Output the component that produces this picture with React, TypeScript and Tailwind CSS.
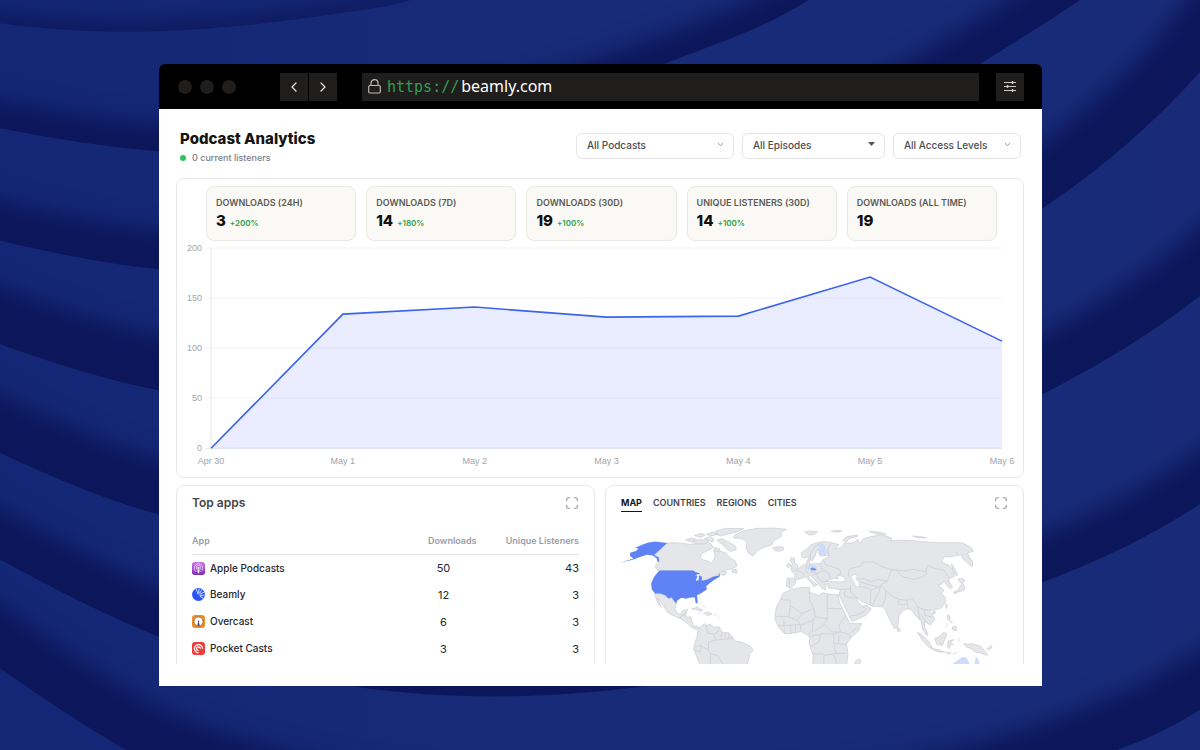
import { ChangeEvent, useState } from "react";
import { ChevronDown, ChevronLeft, ChevronRight, Maximize } from "lucide-react";

const stats = [
  { label: "Downloads (24h)", value: 3, change: "+200%" },
  { label: "Downloads (7d)", value: 14, change: "+180%" },
  { label: "Downloads (30d)", value: 19, change: "+100%" },
  { label: "Unique Listeners (30d)", value: 14, change: "+100%" },
  { label: "Downloads (all time)", value: 19, change: "" },
];

const points = [
  { day: "Apr 30", count: 0 },
  { day: "May 1", count: 134 },
  { day: "May 2", count: 141 },
  { day: "May 3", count: 131 },
  { day: "May 4", count: 132 },
  { day: "May 5", count: 171 },
  { day: "May 6", count: 107 },
];

const apps = [
  { name: "Apple Podcasts", icon: <AppleIcon />, downloads: 50, listeners: 43 },
  { name: "Beamly", icon: <BeamlyIcon />, downloads: 12, listeners: 3 },
  { name: "Overcast", icon: <OvercastIcon />, downloads: 6, listeners: 3 },
  { name: "Pocket Casts", icon: <PocketIcon />, downloads: 3, listeners: 3 },
];

// lower edge of every fold, from top to bottom, with the width of its shadow
const folds = [
  { edge: "M-60 14 C60 36 160 38 306 18 S400 4 520 -60", shadow: 20 },
  { edge: "M-60 116 Q80 146 157 151 C360 160 540 110 669 62 S780 18 900 -60", shadow: 54 },
  { edge: "M-60 226 Q80 262 157 269 C460 300 760 200 983 62 S1030 20 1120 -60", shadow: 78 },
  { edge: "M-60 322 Q80 376 157 390 C500 440 820 340 1043 208 Q1130 150 1200 72 L1300 -60", shadow: 108 },
  { edge: "M-60 424 Q80 494 157 514 C500 590 800 510 1043 394 Q1130 350 1200 296 L1300 210", shadow: 106 },
  { edge: "M-60 526 Q80 606 157 636 C340 704 500 704 640 687 S930 630 1043 582 Q1130 550 1200 504 L1300 440", shadow: 90 },
  { edge: "M-60 625 Q50 706 126 750 C400 880 900 850 1117 750 Q1160 735 1200 710 L1300 650", shadow: 104 },
];

function Background() {
  return (
    <svg aria-hidden="true" className="absolute inset-0 h-full w-full" viewBox="0 0 1200 750" preserveAspectRatio="xMidYMid slice">
      <defs>
        <filter id="soft" filterUnits="userSpaceOnUse" x="-100" y="-150" width="1450" height="1150" colorInterpolationFilters="sRGB">
          <feGaussianBlur stdDeviation="11" />
        </filter>
        <linearGradient id="cloth" gradientUnits="userSpaceOnUse" x1="0" y1="0" x2="1200" y2="0">
          <stop offset="0" stopColor="#142776" />
          <stop offset="0.5" stopColor="#182b78" />
          <stop offset="1" stopColor="#192b78" />
        </linearGradient>
      </defs>
      <rect width="1200" height="750" fill="url(#cloth)" />
      {folds.map((fold) => (
        <g key={fold.edge}>
          <path d={fold.edge} fill="none" stroke="#0c165a" strokeWidth={fold.shadow} filter="url(#soft)" />
          <path d={fold.edge + " H1300 V1200 H-60 Z"} fill="url(#cloth)" />
        </g>
      ))}
    </svg>
  );
}

function AppleIcon() {
  return (
    <svg className="size-[13px]" viewBox="0 0 24 24" aria-hidden="true">
      <defs>
        <linearGradient id="purple" x1="0" y1="0" x2="0" y2="1">
          <stop offset="0" stopColor="#cf78ea" />
          <stop offset="1" stopColor="#7d2cb5" />
        </linearGradient>
      </defs>
      <rect width="24" height="24" rx="5" fill="url(#purple)" />
      <g fill="none" stroke="#f3dcfb" strokeWidth="1.4" strokeLinecap="round">
        <path d="M7.5 18 A8 8 0 1 1 16.500 18" />
        <path d="M9 14 A4.500 4.500 0 1 1 15 14" />
      </g>
      <circle cx="12" cy="11" r="2" fill="#fff" />
      <path d="M10 14.500 Q12 13.300 14 14.500 L13.200 20.500 Q12 21.500 10.800 20.500Z" fill="#fff" />
    </svg>
  );
}

function BeamlyIcon() {
  return (
    <svg className="size-[13px]" viewBox="0 0 24 24" aria-hidden="true">
      <circle cx="12" cy="12" r="12" fill="#2a55f5" />
      <g stroke="#d7e0ff" strokeWidth="1.800" strokeLinecap="round">
        <path d="M11 11 L8 2.500" />
        <path d="M12.500 9.500 L13 2" />
        <path d="M14 9.500 L18 3.500" />
        <path d="M14.500 11.500 L21.500 8" />
        <path d="M15 13.500 L22.500 13.500" />
        <path d="M15 15.500 L20.500 18.500" />
      </g>
    </svg>
  );
}

function OvercastIcon() {
  return (
    <svg className="size-[13px]" viewBox="0 0 24 24" aria-hidden="true">
      <rect width="24" height="24" rx="6" fill="#f08a24" />
      <circle cx="12" cy="12" r="8.500" fill="#fff" stroke="#8a6a3f" strokeWidth="1.600" />
      <path d="M12 11 L14.500 20 H9.500Z" fill="#4a4658" />
      <circle cx="12" cy="11.500" r="1.500" fill="#4a4658" />
    </svg>
  );
}

function PocketIcon() {
  return (
    <svg className="size-[13px]" viewBox="0 0 24 24" aria-hidden="true">
      <rect width="24" height="24" rx="6" fill="#f03b3a" />
      <g fill="none" stroke="#fff" strokeWidth="2.400">
        <path d="M12 20 A7.500 7.500 0 1 1 19.500 12.500" />
        <path d="M12 16 A3.500 3.500 0 1 1 15.500 12.500" />
      </g>
    </svg>
  );
}

function SlidersIcon() {
  return (
    <svg className="h-3 w-3" viewBox="0 0 12 12" fill="none" stroke="#c9c9c9" aria-hidden="true">
      <path d="M0 1.500 H12 M0 5.500 H12 M0 9.500 H12" />
      <path d="M8.500 0 V3 M3.500 4 V7 M8.500 8 V11" strokeWidth="1.500" />
    </svg>
  );
}

function LockIcon() {
  return (
    <svg className="h-[15px] w-[13px] shrink-0" viewBox="0 0 13 15" fill="none" stroke="#b9b9b9" strokeWidth="1.200" aria-hidden="true">
      <rect x="0.700" y="6.500" width="11.600" height="7.500" rx="1.200" />
      <path d="M3 6.500 V4.200 A3.500 3.500 0 0 1 10 4.200 V6.500" />
    </svg>
  );
}

function BrowserBar() {
  const [url, setUrl] = useState("beamly.com");
  const handleUrl = (e: ChangeEvent<HTMLInputElement>) => { setUrl(e.target.value) }

  return (
    <div className="flex h-[45px] items-center rounded-t-md bg-black pr-[18px] pl-[19px]">
      <div className="flex gap-2">
        <span className="size-[14px] rounded-full bg-[#1f1e1d]"></span>
        <span className="size-[14px] rounded-full bg-[#1f1e1d]"></span>
        <span className="size-[14px] rounded-full bg-[#1f1e1d]"></span>
      </div>
      <div className="ml-11 flex gap-px">
        <button type="button" aria-label="Back" className="flex size-7 items-center justify-center bg-[#1f1e1d] text-gray-200">
          <ChevronLeft size={16} strokeWidth={1.8} />
        </button>
        <button type="button" aria-label="Forward" className="flex size-7 items-center justify-center bg-[#1f1e1d] text-gray-200">
          <ChevronRight size={16} strokeWidth={1.8} />
        </button>
      </div>
      <div className="ml-[25px] flex h-7 flex-1 items-center bg-[#1f1e1d] px-1.5">
        <LockIcon />
        <div className="ml-1.5 flex h-[26px] flex-1 items-baseline leading-6">
          <label htmlFor="url" className="font-['DejaVu_Sans_Mono',monospace] text-[15px] text-[#2f9e4f]">https://</label>
          <input
            id="url"
            type="text"
            value={url}
            onChange={handleUrl}
            className="ml-0.5 h-6 min-w-0 flex-1 bg-transparent font-['Noto_Sans',sans-serif] text-[16px] text-white outline-none"
          />
        </div>
      </div>
      <button type="button" aria-label="Settings" className="ml-[17px] flex size-7 items-center justify-center bg-[#1f1e1d]">
        <SlidersIcon />
      </button>
    </div>
  );
}

type FilterProps = { label: string; text: string; width: string; solid?: boolean };

function Filter({ label, text, width, solid }: FilterProps) {
  return (
    <div className={"relative " + width}>
      <select
        aria-label={label}
        className="h-[26px] w-full appearance-none rounded-md border border-[#e5e5e7] bg-white pl-2.5 text-[10px] font-medium text-[#4c4d53]"
      >
        <option>{text}</option>
      </select>
      {solid ? (
        <svg className="pointer-events-none absolute top-[11px] right-2.5 h-1 w-[7px]" viewBox="0 0 7 4" aria-hidden="true">
          <path d="M0 0 H7 L3.500 4Z" fill="#55565c" />
        </svg>
      ) : (
        <ChevronDown size={9} className="pointer-events-none absolute top-[9px] right-[9px] text-[#75767c]" />
      )}
    </div>
  );
}

function Chart() {
  const x = (i: number) => 34 + (i * 790) / 6;
  const y = (count: number) => 207 - count;
  const line = points.map((p, i) => x(i) + "," + y(p.count)).join(" ");

  return (
    <svg className="block w-full" viewBox="0 0 845 236" role="img" aria-label="Downloads per day">
      {[0, 50, 100, 150, 200].map((tick) => (
        <g key={tick}>
          <line x1="29" x2="824" y1={y(tick)} y2={y(tick)} stroke={tick ? "#f3f4f6" : "#dfe1e6"} />
          <text x="25" y={y(tick) + 3} textAnchor="end" fontSize="9" fill="#a1a4ac" fontFamily="Liberation Sans, Arial, sans-serif">{tick}</text>
        </g>
      ))}
      <line x1="34" x2="34" y1="7" y2="207" stroke="#e5e7eb" />
      <polygon points={"34,207 " + line + " 824,207"} fill="#4f63ff" fillOpacity="0.12" />
      <polyline points={line} fill="none" stroke="#3b63ee" strokeWidth="1.600" />
      {points.map((p, i) => (
        <text key={p.day} x={x(i)} y="223" textAnchor="middle" fontSize="9" fill="#a1a4ac" fontFamily="Liberation Sans, Arial, sans-serif">{p.day}</text>
      ))}
    </svg>
  );
}

function WorldMap() {
  return (
    <svg className="block w-full" viewBox="18 30 1248 432" role="img" aria-label="Listeners by country" strokeLinejoin="round">
      <g fill="#e5e6ea" stroke="#cbccd2" strokeWidth="2">
        {/* Canada and the arctic islands */}
        <path d="M201 99 L222 98 L250 100 L268 103 L300 100 L310 104 L322 96 L332 101 L340 112 L322 122 L305 130 L300 142 L310 150 L322 152 L332 160 L340 150 L345 135 L340 122 L360 122 L378 130 L388 143 L405 152 L410 168 L395 176 L375 180 L362 183 L380 186 L375 194 L365 196 L358 190 L340 200 L318 210 L302 214 L305 200 L290 190 L278 181 L172 181 L165 168 L176 155 L176 142 L162 135Z" />
        <path d="M395 180 l12 -3 l4 12 l-14 -2z M255 90 l18 -6 l15 4 l-12 8z M278 95 L300 88 L325 92 L318 100 L290 102Z M282 76 L305 70 L315 76 L300 82Z M312 86 L330 80 L342 88 L336 96Z M318 72 l22 -6 l14 6 l-20 6z M345 64 L375 55 L430 56 L415 64 L385 72 L360 78 L350 74Z M350 90 L365 86 L385 96 L405 108 L408 118 L392 124 L378 116 L368 104Z M345 112 l14 4 l-4 8 l-14 -4z" />
        {/* Greenland, Iceland */}
        <path d="M402 76 L430 62 L470 55 L520 54 L558 58 L540 68 L545 78 L520 92 L515 104 L490 112 L470 122 L458 138 L445 130 L437 115 L440 98 L425 85 L400 84Z M518 113 l12 -3 l18 1 l2 8 l-16 5 l-12 -4z" />
        {/* Mexico, central America, the Caribbean */}
        <path d="M163 250 L180 251 L195 256 L205 265 L215 263 L221 271 L228 280 L224 295 L230 308 L240 312 L250 300 L262 298 L258 310 L245 316 L238 324 L218 316 L202 306 L192 290 L180 272 L172 262 L178 278 L184 292 L176 284 L168 266Z M238 324 L245 316 L258 313 L256 320 L272 320 L276 335 L278 347 L290 347 L297 352 L288 357 L275 352 L262 340 L248 330Z" />
        <path d="M274 296 L290 291 L308 300 L302 303 L285 297Z M310 309 l14 -4 l12 6 l-12 5z M296 309 h6 M342 314 h6 M300 276 l4 6 M308 284 l10 8 M357 320 l1 3" />
        {/* South America */}
        <path d="M293 357 L312 340 L318 345 L330 342 L340 350 L358 350 L365 365 L385 368 L397 380 L402 392 L425 396 L448 406 L458 418 L448 432 L440 470 L302 470 L290 440 L280 415 L285 395 L292 375Z" />
        <path fill="none" d="M318 345 L322 368 L342 372 L345 390 M342 372 L358 360 M365 365 L362 385 M375 368 L374 384 M387 370 L382 386 M345 390 L362 388 L382 386 L398 382 M345 390 L325 396 L325 420 L302 405 L285 408 M325 420 L332 432 L352 435 L368 462 M332 432 L330 462 M283 418 L300 425 L302 405" />
      </g>
      {/* United States */}
      <path fill="#5f83f6" d="M60 158 L100 145 L90 138 L90 128 L108 123 L115 115 L105 113 L128 103 L145 97 L165 94 L201 99 L162 135 L176 142 L177 155 L172 155 L170 145 L158 136 L140 134 L122 140 L100 148Z" />
      <path fill="#5f83f6" d="M178 181 L278 181 L286 186 L300 190 L284 195 L292 197 L287 212 L295 210 L296 196 L305 200 L304 212 L322 208 L338 200 L354 196 L359 188 L358 200 L340 210 L332 216 L318 228 L320 238 L305 248 L290 256 L292 270 L292 281 L286 278 L284 262 L270 262 L258 266 L244 263 L232 270 L228 280 L220 270 L215 262 L205 265 L195 255 L180 250 L165 250 L155 238 L153 220 L162 200 L170 190Z" />
      <g transform="translate(510 0)" fill="#e5e6ea" stroke="#cbccd2" strokeWidth="2">
        {/* islands of the Arctic sea */}
        <path d="M102 66 l15 -3 l25 2 l-10 8 l-15 2z M182 64 l20 -3 l12 2 l-15 4z M215 92 L228 80 L258 75 L262 78 L235 86 L228 96Z M295 64 L325 66 L345 72 L320 73Z M425 78 l20 1 l22 4 l-25 1z" />
        {/* Eurasia */}
        <path d="M185 98 L205 104 L192 118 L212 112 L220 100 L250 98 L262 88 L268 102 L278 86 L300 80 L335 74 L362 84 L362 92 L400 90 L430 92 L455 95 L500 98 L540 98 L575 98 L600 112 L608 124 L590 128 L596 142 L606 156 L604 170 L590 158 L575 146 L572 134 L555 138 L560 126 L548 140 L520 140 L512 156 L534 165 L548 180 L550 200 L535 204 L535 214 L545 230 L540 236 L530 228 L522 214 L512 222 L502 224 L512 234 L520 240 L512 250 L524 262 L524 278 L510 294 L490 300 L475 300 L485 312 L492 328 L478 344 L468 338 L460 334 L462 352 L472 372 L468 376 L456 358 L450 330 L438 320 L425 304 L418 296 L400 298 L385 316 L382 345 L372 356 L362 338 L352 318 L345 300 L334 290 L305 288 L285 278 L270 272 L258 262 L262 276 L275 288 L290 286 L302 296 L285 316 L244 334 L232 308 L212 268 L205 252 L210 238 L175 234 L168 222 L180 214 L210 216 L226 212 L220 200 L205 195 L198 204 L205 206 L190 204 L175 210 L164 222 L165 240 L152 232 L142 218 L120 196 L112 200 L132 218 L142 224 L130 230 L122 218 L105 200 L92 206 L78 208 L72 224 L62 234 L48 230 L50 204 L72 204 L74 190 L62 182 L80 178 L96 166 L108 162 L110 150 L116 150 L118 162 L150 160 L158 148 L175 140 L172 118 L176 104Z" />
        <path d="M94 140 L92 128 L108 118 L120 105 L140 98 L160 94 L185 98 L178 104 L172 118 L175 136 L150 138 L146 132 L145 115 L138 125 L133 140 L125 152 L114 148 L112 140 L98 144Z" />
        <path fill="#fff" d="M240 200 L252 192 L262 196 L256 206 L266 216 L268 228 L256 230 L248 214Z" />
        <path d="M62 178 L82 174 L82 166 L72 156 L72 145 L62 142 L60 152 L66 160 L62 168Z M48 166 l8 -8 l5 7 l-7 8z" />
        <path fill="none" d="M234 200 L234 185 L240 175 L270 168 L278 156 L310 156 L330 168 L362 178 L378 180 L400 182 L430 178 L465 185 L470 165 L490 175 L520 180 L535 204 M378 180 L395 200 L430 208 L455 200 L470 188 L465 185 M362 178 L355 200 L350 212 L320 208 L300 215 L280 205 L262 206 M350 212 L330 225 L345 240 L360 255 L385 268 L408 270 L425 265 L440 290 L460 298 L475 300 M330 225 L325 245 L315 262 L305 288 M345 240 L345 262 L335 288 M268 228 L285 232 L300 240 L300 285 M240 225 L240 245 L258 262 M300 240 L330 228 M210 238 L240 236 M225 240 L220 256 L235 262 L258 264 M270 216 L320 230 M236 318 L262 314 L285 300 M275 290 L288 296 M408 270 L412 295 M440 290 L448 330 M460 298 L462 315 L482 320 M450 310 L465 335 M385 268 L382 282 L410 284" />
        <path fill="none" d="M158 148 L165 165 L180 168 L208 178 L210 190 L200 196 M150 160 L152 175 L168 182 M118 164 L118 172 M108 165 L106 180 L112 190 M80 180 L100 190 L100 200 M58 206 L56 230 M118 185 L140 190 L155 182 L175 190 L178 204 M140 190 L142 205 L155 215 L175 212 M125 196 L140 190 M120 150 L120 130 L135 108 L150 100" />
        {/* Africa */}
        <path d="M38 250 L60 238 L95 232 L116 232 L118 246 L145 256 L155 248 L180 252 L203 254 L206 275 L224 312 L238 340 L272 340 L265 360 L240 385 L228 400 L232 430 L228 470 L126 470 L128 435 L116 400 L118 382 L108 372 L92 364 L60 370 L42 370 L25 352 L15 330 L14 315 L18 290 L30 268Z M250 466 L255 452 L266 446 L270 450 L266 466Z" />
        <path fill="none" d="M30 268 L60 270 L58 285 L95 310 L130 295 L118 270 L116 246 M130 295 L135 320 L170 326 L170 252 M60 285 L55 320 L16 318 M170 295 L214 295 M55 320 L80 330 L95 310 M80 330 L90 345 L128 330 L135 320 M90 345 L92 364 M75 345 L75 368 M60 345 L62 370 M22 345 L60 345 L90 342 M40 330 L42 368 M128 330 L125 360 L112 372 M170 326 L160 345 L135 360 L125 365 M165 345 L185 365 L210 365 L205 345 L218 325 L226 314 M210 365 L235 372 L262 350 M235 372 L238 385 M118 378 L150 372 L160 370 L190 372 L190 400 L195 430 L165 435 L155 430 L128 432 M190 400 L228 402 M195 430 L230 428 M160 435 V462 M190 432 L200 462 M150 372 L145 395 L120 410 M190 372 L210 365 M205 375 L204 400" />
        {/* Asian islands */}
        <path d="M378 350 l8 4 l3 8 l-8 2z M542 162 L552 175 L560 195 L555 196 L546 180Z M562 206 l16 0 l4 8 l-14 4z M575 218 L582 230 L580 240 L560 246 L552 252 L548 246 L562 240 L568 228Z M526 282 l4 3 l-3 10 l-3 -6z M486 304 l8 0 l-2 7 l-6 -2z M530 314 L538 318 L536 330 L545 338 L540 336 L530 325Z M545 350 L556 348 L556 362 L545 358Z M526 350 l6 -8 M440 366 L455 375 L475 395 L485 414 L475 412 L455 390Z M482 415 L505 418 L522 426 L500 424Z M492 385 L505 380 L520 365 L528 372 L520 392 L515 405 L498 402Z M532 392 L550 388 L538 396 L548 404 L540 402 L536 414 L530 410Z M525 426 l16 2 l-6 4z M545 432 l14 -5 M563 384 l4 10 M578 400 L592 402 L605 400 L630 408 L640 420 L650 435 L628 428 L615 426 L600 415 L588 410Z M648 414 l12 -4 l-2 -6 l6 6 l-10 9z" />
        {/* Finland, Czechia, Australia */}
        <path stroke="none" fill="#cfdbfb" d="M140 102 L158 100 L164 110 L170 128 L160 138 L146 136 L142 126 L150 116Z M540 466 L562 448 L575 440 L590 444 L590 450 L600 466Z M610 466 L615 440 L622 445 L628 466Z M110 168 l14 -4 l16 4 l-4 6 l-24 4z" />
        <path stroke="none" fill="#7b9be0" d="M119 175 l7 -3 l12 4 l-2 5 l-14 0z" />
      </g>
    </svg>
  );
}

function App() {
  const [tab, setTab] = useState("MAP");

  return (
    <div className="relative min-h-screen overflow-hidden bg-[#152672] font-['Inter',sans-serif]">
      <Background />
      <main className="relative mr-[158px] ml-[159px] pt-16">
        <BrowserBar />
        <div className="bg-white pr-[18px] pb-[22px] pl-[17px]">
          <header className="flex items-start justify-between pt-5 pr-[3px] pl-1">
            <div>
              <h1 className="text-[15px] leading-5 font-extrabold text-[#15140f]">Podcast Analytics</h1>
              <p className="flex items-center gap-1.5 text-[9px] leading-[18px] font-medium text-[#7a7e8c]">
                <span className="size-1.5 rounded-full bg-[#2fc463]"></span>
                0 current listeners
              </p>
            </div>
            <div className="mt-0.5 flex gap-2">
              <Filter label="Podcast" text="All Podcasts" width="w-[158px]" />
              <Filter label="Episode" text="All Episodes" width="w-[143px]" solid />
              <Filter label="Access level" text="All Access Levels" width="w-[128px]" />
            </div>
          </header>

          <section className="mt-[11px] rounded-lg border border-[#e8e8ea] pt-[7px]">
            <div className="mr-[26px] ml-[29px] grid grid-cols-5 gap-2.5">
              {stats.map((stat) => (
                <div key={stat.label} className="h-[55px] rounded-lg border border-[#e9e8e3] bg-[#faf9f5] px-[9px] pt-2.5">
                  <p className="text-[9px] leading-3 font-semibold whitespace-nowrap text-[#5b5b56] uppercase">{stat.label}</p>
                  <p className="flex items-baseline gap-1 leading-6">
                    <span className="text-[15px] font-extrabold text-[#12110c]">{stat.value}</span>
                    <span className="text-[8px] font-semibold text-[#2ba14b]">{stat.change}</span>
                  </p>
                </div>
              ))}
            </div>
            <Chart />
          </section>

          <div className="mt-[7px] grid h-[179px] grid-cols-2 gap-2.5 overflow-hidden">
            <section className="h-60 rounded-lg border border-[#e8e8ea] px-[15px] pt-2">
              <div className="flex items-center justify-between">
                <h2 className="text-[12px] leading-[18px] font-semibold text-[#45464b]">Top apps</h2>
                <button type="button" aria-label="Expand top apps" className="text-[#9a9ba1]"><Maximize size={14} strokeWidth={2} /></button>
              </div>
              <table className="mt-[19px] w-full text-[#26272d]">
                <thead>
                  <tr className="h-[23px] border-b border-[#e3e3e6] text-[9px] text-[#9b9eaa]">
                    <th scope="col" className="pb-1 text-left font-semibold">App</th>
                    <th scope="col" className="w-[75px] pb-1 text-left font-semibold">Downloads</th>
                    <th scope="col" className="w-[76px] pb-1 text-right font-semibold whitespace-nowrap">Unique Listeners</th>
                  </tr>
                </thead>
                <tbody>
                  {apps.map((app) => (
                    <tr key={app.name} className="h-[27px] text-[11px]">
                      <td>
                        <span className="flex items-center gap-[5px] text-[10px] font-medium">{app.icon}{app.name}</span>
                      </td>
                      <td><span className="block w-[31px] text-center">{app.downloads}</span></td>
                      <td className="text-right">{app.listeners}</td>
                    </tr>
                  ))}
                </tbody>
              </table>
            </section>

            <section className="h-60 rounded-lg border border-[#e8e8ea] pt-2">
              <div className="flex items-center justify-between px-[15px]">
                <div className="flex gap-[11px]">
                  {["MAP", "COUNTRIES", "REGIONS", "CITIES"].map((name) => (
                    <button
                      key={name}
                      type="button"
                      onClick={() => setTab(name)}
                      className={
                        tab === name
                          ? "border-b border-[#15140f] text-[9px] leading-[17px] font-bold text-[#15140f]"
                          : "border-b border-transparent text-[9px] leading-[17px] font-semibold text-[#45464b]"
                      }
                    >
                      {name}
                    </button>
                  ))}
                </div>
                <button type="button" aria-label="Expand map" className="text-[#9a9ba1]"><Maximize size={14} strokeWidth={2} /></button>
              </div>
              <div className="mt-2">
                <WorldMap />
              </div>
            </section>
          </div>
        </div>
      </main>
    </div>
  );
}

export default App
